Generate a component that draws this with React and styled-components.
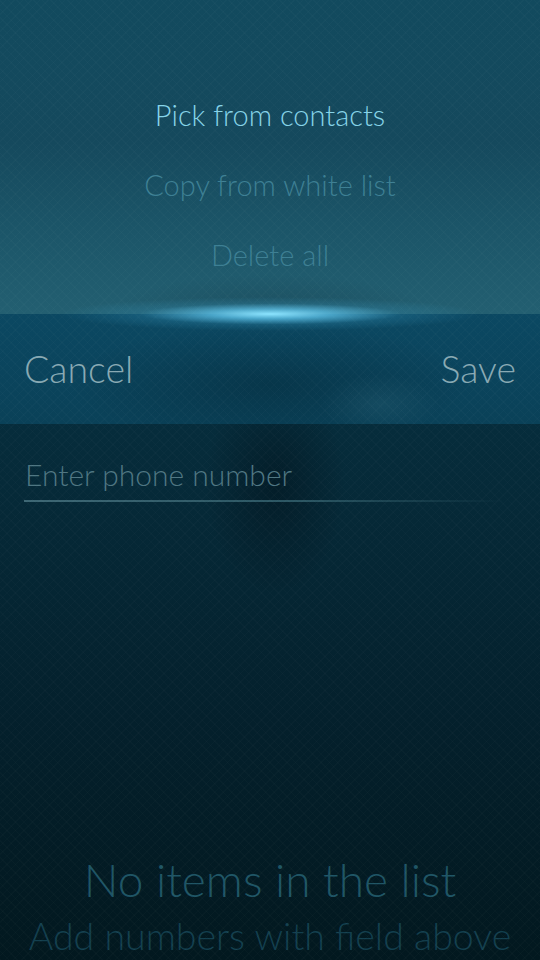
// App.jsx
// Sailfish style dialog: pulley menu on top, accept header, phone field, empty list hint.

import styled, { createGlobalStyle } from 'styled-components';

// ------------------------------
// Global styles
// ------------------------------

const GlobalStyle = createGlobalStyle`
  html, body {
    margin: 0;
    padding: 0;
    background: #03161f;
  }
  * {
    box-sizing: border-box;
  }
`;

// ------------------------------
// Styled components
// ------------------------------

const Page = styled.div`
  position: relative;
  display: flex;
  flex-direction: column;
  width: 540px;
  height: 960px;
  overflow: hidden;
  font-family: 'Lato', 'Open Sans', sans-serif;
  font-weight: 300;
  background: linear-gradient(180deg, #07344a 0px, #062c3b 440px, #04202c 720px, #02181f 960px);

  // diamond texture of the ambience
  &::after {
    content: '';
    position: absolute;
    inset: 0;
    pointer-events: none;
    background-image:
      repeating-linear-gradient(45deg, rgba(255, 255, 255, 0.014) 0 1px, transparent 1px 6px),
      repeating-linear-gradient(-45deg, rgba(255, 255, 255, 0.014) 0 1px, transparent 1px 6px);
  }
`;

const PulleyMenu = styled.div`
  position: relative;
  display: flex;
  flex-direction: column;
  align-items: center;
  justify-content: flex-end;
  height: 314px;
  padding-bottom: 24px;
  background:
    radial-gradient(ellipse 160px 40px at 50% 100%, rgba(20, 60, 75, 0.45), transparent),
    linear-gradient(180deg, #124a5e 0%, #15495d 45%, #1c5669 75%, #235f71 100%);
`;

const MenuItem = styled.div`
  height: 70px;
  line-height: 70px;
  font-size: 29px;
  color: ${(p) => (p.$active ? '#86d3e8' : '#3d7f93')};
  white-space: nowrap;
`;

const Glow = styled.div`
  position: absolute;
  left: 50%;
  top: 314px;
  width: 420px;
  height: 34px;
  transform: translate(-50%, -50%);
  pointer-events: none;
  background: radial-gradient(ellipse 50% 50% at 50% 50%, rgba(140, 228, 255, 1) 0%, rgba(100, 205, 245, 0.7) 28%, rgba(60, 160, 200, 0.22) 62%, transparent 100%);
  z-index: 2;
`;

const DialogHeader = styled.div`
  display: flex;
  align-items: center;
  justify-content: space-between;
  height: 110px;
  padding: 0 24px;
  background:
    radial-gradient(ellipse 60px 30px at 380px 90px, rgba(60, 120, 140, 0.22), transparent),
    radial-gradient(ellipse 200px 60px at 270px 70px, rgba(2, 30, 42, 0.35), transparent),
    linear-gradient(180deg, #0b4862 0%, #0a4158 100%);
`;

const HeaderButton = styled.span`
  font-size: 37.5px;
  color: #88a9b3;
  line-height: 1;
`;

const Content = styled.div`
  position: relative;
  display: flex;
  flex-direction: column;
  flex: 1;
  background:
    radial-gradient(ellipse 70px 110px at 275px 60px, rgba(1, 14, 22, 0.45), transparent);
`;

const Field = styled.div`
  display: flex;
  flex-direction: column;
  padding: 30px 24px 0 24px;
`;

const Placeholder = styled.span`
  height: 40px;
  line-height: 40px;
  font-size: 30px;
  color: #4f7682;
  padding-left: 1px;
`;

const Underline = styled.div`
  height: 2px;
  margin-top: 6px;
  width: 480px;
  background: linear-gradient(90deg, #3d6774 0%, #2a5562 60%, rgba(30, 70, 85, 0) 100%);
`;

const EmptyState = styled.div`
  display: flex;
  flex-direction: column;
  align-items: center;
  margin-top: auto;
  margin-bottom: -4px;
`;

const EmptyTitle = styled.div`
  height: 56px;
  line-height: 56px;
  font-size: 46px;
  color: #1f5565;
  white-space: nowrap;
`;

const EmptyHint = styled.div`
  height: 56px;
  line-height: 56px;
  font-size: 37.5px;
  color: #133f4e;
  white-space: nowrap;
`;

// ------------------------------
// Component
// ------------------------------

const menuItems = [
  { label: 'Pick from contacts', active: true },
  { label: 'Copy from white list' },
  { label: 'Delete all' },
];

function App() {
  return (
    <>
      <GlobalStyle />
      <Page>
        {/* Pulley menu pulled open */}
        <PulleyMenu>
          {menuItems.map((item) => (
            <MenuItem key={item.label} $active={item.active}>
              {item.label}
            </MenuItem>
          ))}
        </PulleyMenu>
        <Glow />

        {/* Dialog header with accept / cancel */}
        <DialogHeader>
          <HeaderButton>Cancel</HeaderButton>
          <HeaderButton>Save</HeaderButton>
        </DialogHeader>

        <Content>
          <Field>
            <Placeholder>Enter phone number</Placeholder>
            <Underline />
          </Field>

          <EmptyState>
            <EmptyTitle>No items in the list</EmptyTitle>
            <EmptyHint>Add numbers with field above</EmptyHint>
          </EmptyState>
        </Content>
      </Page>
    </>
  );
}

export default App;
